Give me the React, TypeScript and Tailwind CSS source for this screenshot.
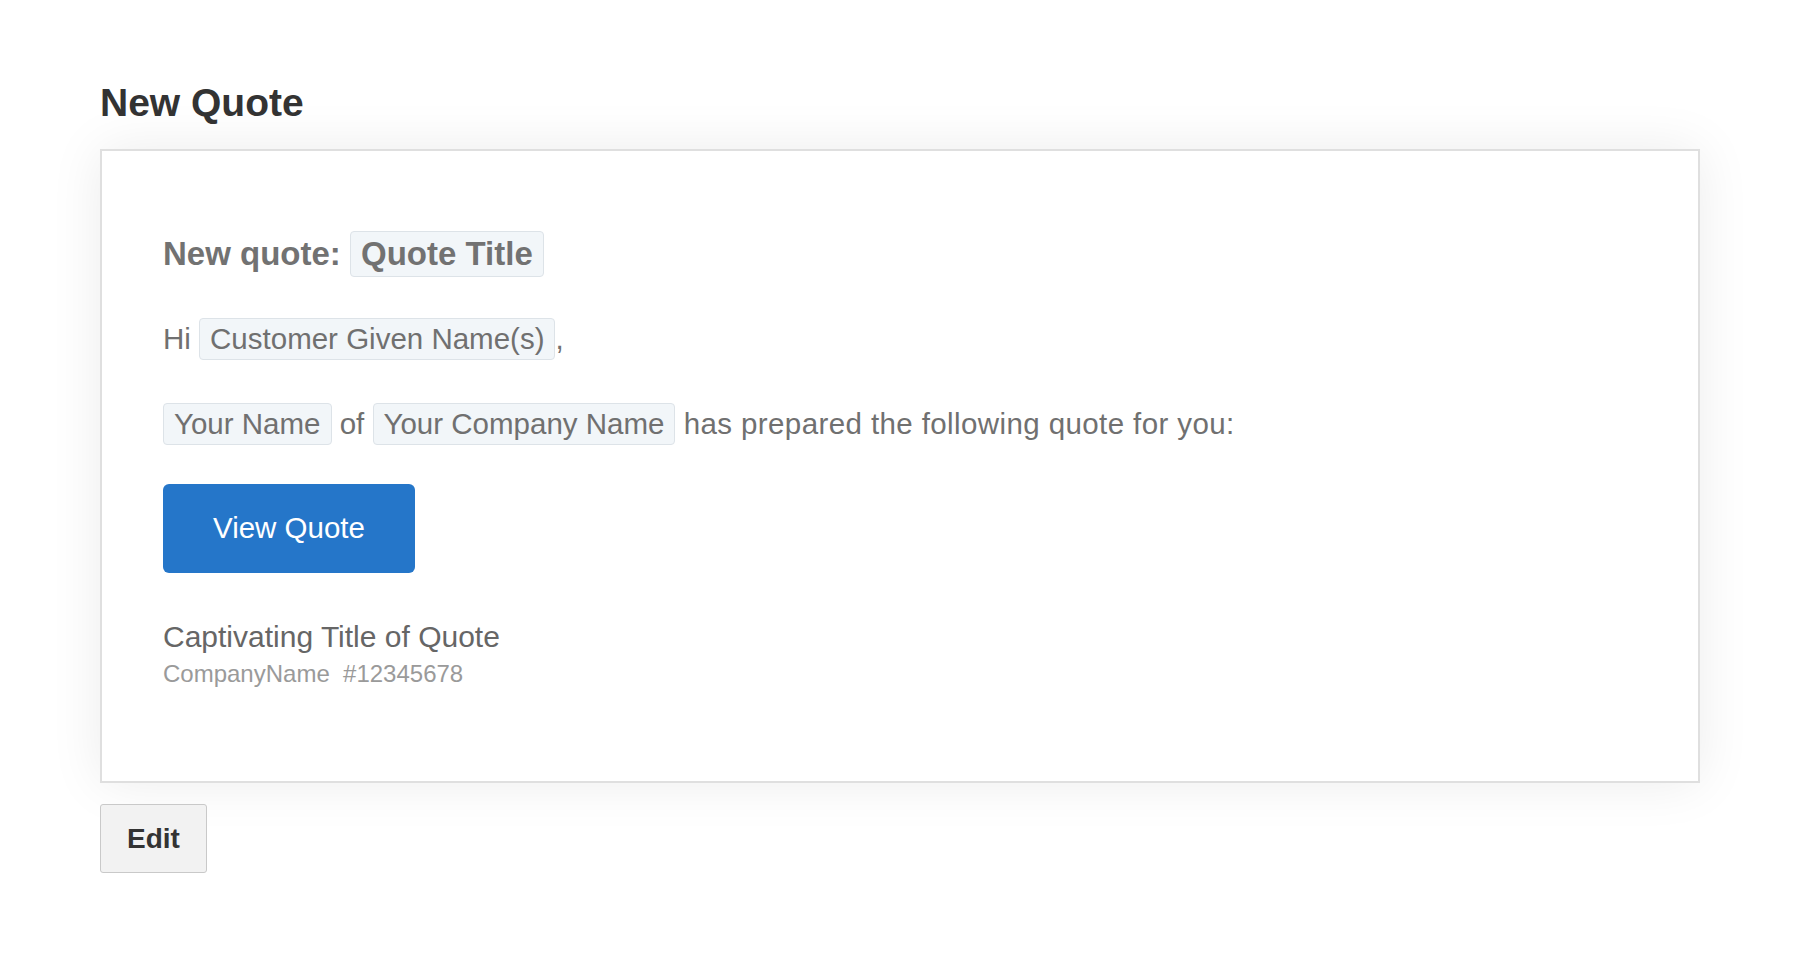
function Token({ children, size = 'md' }: { children: React.ReactNode; size?: 'md' | 'lg' }) {
  const cls =
    size === 'lg'
      ? 'inline-block rounded-[4px] border border-[#dde3e8] bg-[#f2f6f9] px-[10px] py-[3px] leading-[38px]'
      : 'inline-block rounded-[4px] border border-[#dde3e8] bg-[#f2f6f9] px-[10px] py-[3px] leading-[34px]';
  return <span className={cls}>{children}</span>;
}

export default function App() {
  return (
    <div className="min-h-[972px] bg-white px-[100px] font-['Liberation_Sans',Arial,sans-serif]">
      <h1 className="pt-[80px] text-[39px] font-bold leading-[46px] text-[#333333]">New Quote</h1>

      {/* Email preview card */}
      <div className="mt-[23px] border-2 border-[#dfdfdf] bg-white px-[61px] pt-[80px] pb-[93px] shadow-[0_0_50px_rgba(0,0,0,0.08)]">
        <div className="text-[33px] font-bold leading-[38px] text-[#727272]">
          New quote: <Token size="lg">Quote Title</Token>
        </div>

        <div className="mt-[41px] text-[29.5px] leading-[34px] text-[#707070]">
          Hi <Token>Customer Given Name(s)</Token>,
        </div>

        <div className="mt-[43px] text-[29.5px] leading-[34px] text-[#707070]">
          <Token>Your Name</Token> of <Token>Your Company Name</Token>{' '}
          <span className="tracking-[0.4px]">has prepared the following quote for you:</span>
        </div>

        <button className="mt-[39px] flex h-[89px] items-center rounded-[6px] bg-[#2576c9] px-[50px] text-[29.5px] text-white">
          View Quote
        </button>

        <div className="mt-[46px] text-[30px] leading-[36px] text-[#666666]">Captivating Title of Quote</div>
        <div className="mt-[5px] whitespace-pre text-[24px] leading-[28px] text-[#9a9a9a]">CompanyName  #12345678</div>
      </div>

      <button className="mt-[21px] flex h-[69px] w-[107px] items-center justify-center rounded-[3px] border border-[#c9c9c9] bg-[#f2f2f2] text-[28px] font-bold text-[#333333]">
        Edit
      </button>
    </div>
  );
}
